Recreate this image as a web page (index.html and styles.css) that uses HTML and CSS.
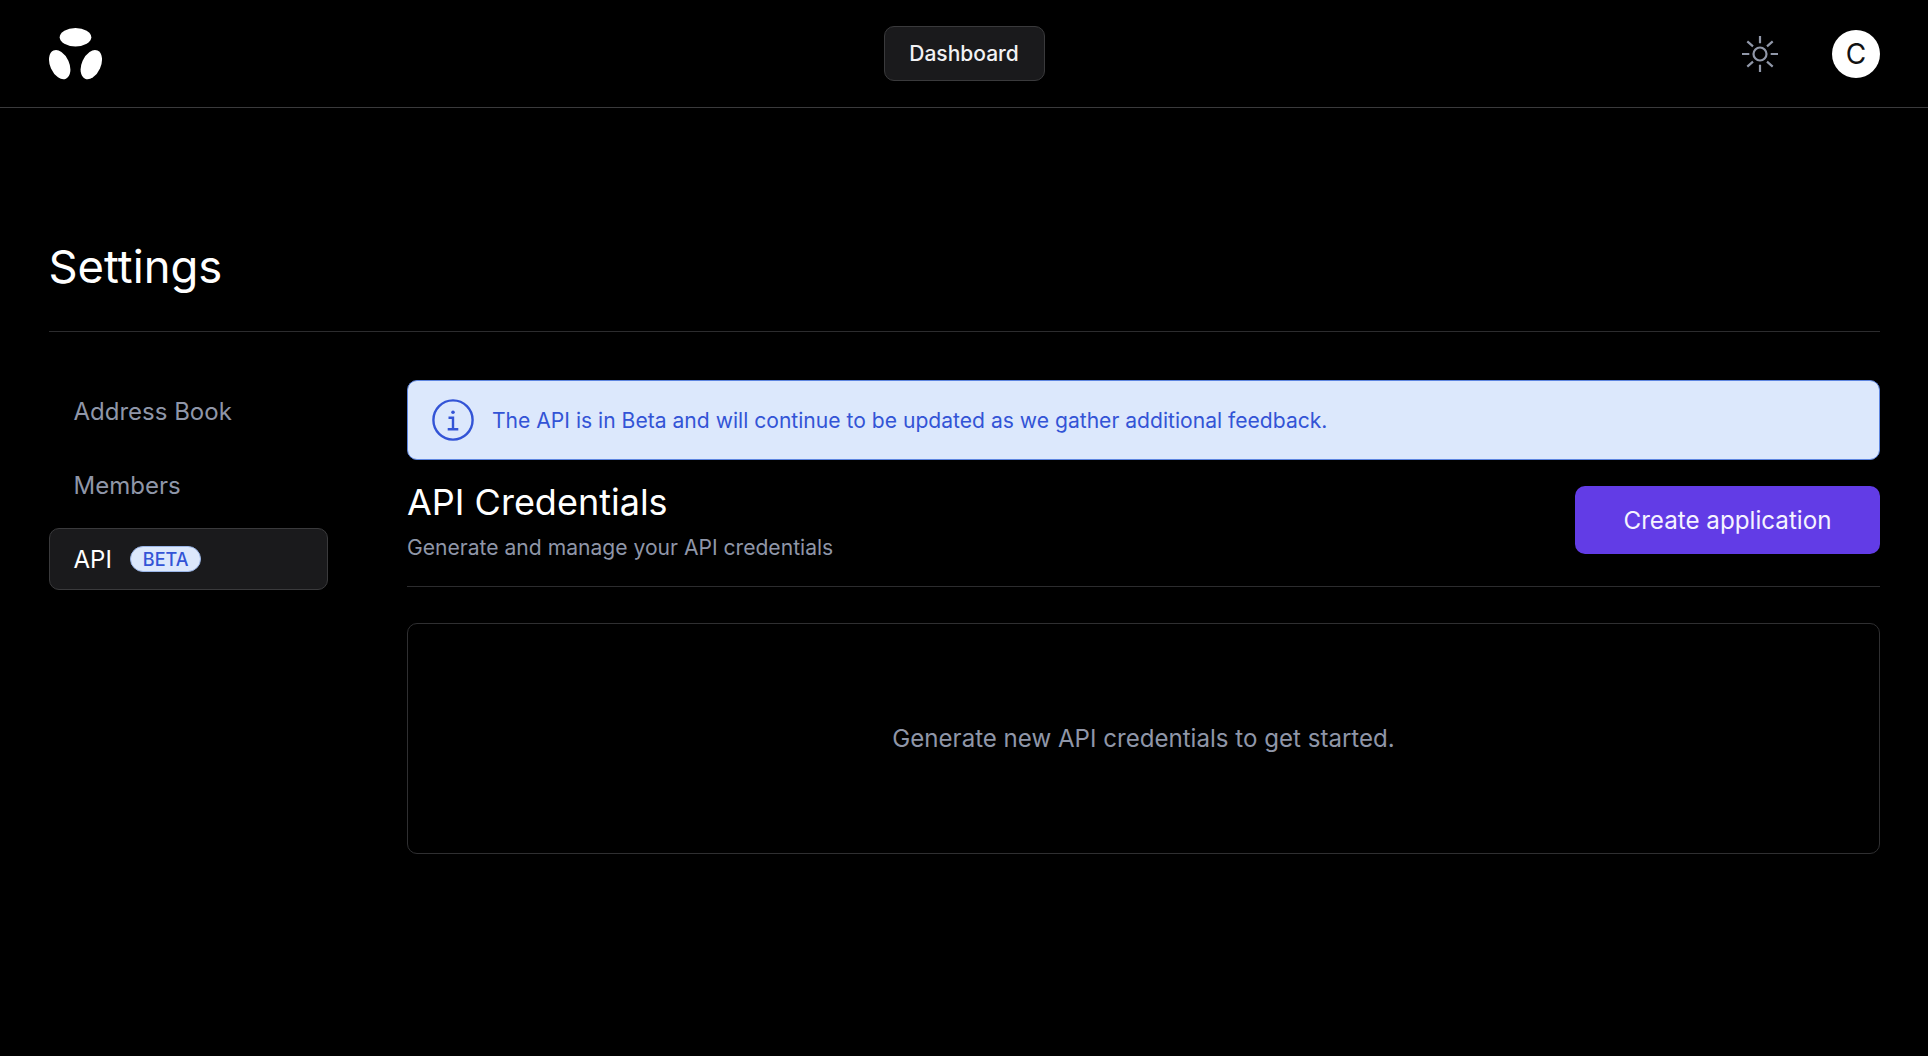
FILE: index.html
```html
<!DOCTYPE html>
<html lang="en">
<head>
<meta charset="utf-8">
<title>Settings</title>
<link rel="stylesheet" href="styles.css">
</head>
<body>
<header class="topbar">
  <svg class="logo" width="55" height="52" viewBox="0 0 55 52" aria-hidden="true">
    <ellipse cx="27.5" cy="9.2" rx="15.8" ry="9.2" fill="#fff"/>
    <ellipse cx="11.7" cy="36.6" rx="9.5" ry="15.4" fill="#fff" transform="rotate(-24 11.7 36.6)"/>
    <ellipse cx="43.3" cy="36.6" rx="9.5" ry="15.4" fill="#fff" transform="rotate(24 43.3 36.6)"/>
  </svg>
  <a class="tab">Dashboard</a>
  <div class="actions">
    <svg class="sun" width="38" height="38" viewBox="0 0 38 38" fill="none" stroke="#9097a8" stroke-width="2.2" aria-hidden="true">
      <circle cx="19" cy="19" r="6.5"/>
      <path d="M19 1v7.3M19 29.7V37M1 19h7.3M29.7 19H37M6.3 6.3l5.7 5M26 26.7l5.7 5M6.3 31.7l5.7-5M26 11.3l5.7-5"/>
    </svg>
    <div class="avatar">C</div>
  </div>
</header>
<main class="page">
  <h1 class="title">Settings</h1>
  <div class="layout">
    <nav class="sidenav">
      <a class="navitem">Address Book</a>
      <a class="navitem">Members</a>
      <a class="navitem active">API <span class="badge">BETA</span></a>
    </nav>
    <section class="content">
      <div class="banner">
        <svg class="info" width="42" height="42" viewBox="0 0 42 42" fill="none" stroke="#3354d6" aria-hidden="true">
          <circle cx="21" cy="21" r="19.6" stroke-width="2.4"/>
          <path d="M16.5 18.7h4.5v11.6M15.7 30.3h10.6" stroke-width="2.4"/>
          <circle cx="21" cy="13.2" r="1.8" fill="#3354d6" stroke="none"/>
        </svg>
        <span>The API is in Beta and will continue to be updated as we gather additional feedback.</span>
      </div>
      <div class="section-head">
        <div>
          <h2 class="section-title">API Credentials</h2>
          <p class="section-sub">Generate and manage your API credentials</p>
        </div>
        <button class="primary">Create application</button>
      </div>
      <div class="empty">Generate new API credentials to get started.</div>
    </section>
  </div>
</main>
</body>
</html>
```
FILE: styles.css
```css
* { box-sizing: border-box; }
html, body { margin: 0; height: 100%; }
body { background: #000; color: #fff; font-family: Inter, "Liberation Sans", sans-serif; }
.topbar { height: 108px; border-bottom: 1px solid #3a3a3c; padding: 0 48px 0 48px; display: grid; grid-template-columns: 1fr auto 1fr; align-items: center; }
.logo { display: block; margin-top: 1px; }
.tab { justify-self: center; width: 161px; height: 55px; display: flex; align-items: center; justify-content: center; background: #1a1a1c; border: 1px solid #3a3a3c; border-radius: 10px; font-size: 21px; font-weight: 500; color: #f2f2f4; }
.actions { display: flex; justify-content: flex-end; align-items: center; gap: 53px; }
.sun { display: block; }
.avatar { width: 48px; height: 48px; border-radius: 50%; background: #fff; color: #111; display: flex; align-items: center; justify-content: center; font-size: 28px; }
.page { padding: 0 48px 0 48.5px; }
.title { margin: 0; padding-top: 129px; height: 224px; font-size: 45.4px; font-weight: 400; line-height: 60px; border-bottom: 1px solid #2c2c2e; }
.layout { display: grid; grid-template-columns: 279.5px 1fr; column-gap: 79px; padding-top: 48px; }
.sidenav { display: flex; flex-direction: column; gap: 12px; }
.navitem { height: 62px; padding: 0 24px; display: flex; align-items: center; font-size: 24px; color: #8f96a8; border: 1px solid transparent; border-radius: 10px; }
.navitem.active { background: #1a1a1c; border-color: #3a3a3c; color: #fff; }
.badge { margin-left: 18px; height: 26px; padding: 0 12px; display: inline-flex; align-items: center; border-radius: 13px; background: #dce8fc; border: 1px solid #9bb6e8; color: #3354d6; font-size: 18px; font-weight: 500; }
.banner { height: 80px; padding: 0 24px; display: flex; align-items: center; gap: 18px; background: #dce8fc; border: 1px solid #5e86e0; border-radius: 10px; color: #3354d6; font-size: 21.1px; }
.info { flex: none; }
.section-head { display: flex; justify-content: space-between; align-items: flex-start; padding-top: 26px; height: 127px; border-bottom: 1px solid #2c2c2e; }
.section-title { margin: -2px 0 0; font-size: 36px; font-weight: 400; line-height: 36px; }
.section-sub { margin: 13px 0 0; font-size: 21.1px; color: #8f96a8; line-height: 30px; }
.primary { width: 305px; height: 68px; background: #623ce6; color: #f5f3ff; border: none; border-radius: 10px; font: 400 24.2px Inter, "Liberation Sans", sans-serif; }
.empty { margin-top: 36px; height: 231px; display: flex; align-items: center; justify-content: center; border: 1px solid #2f2f31; border-radius: 10px; color: #8f96a8; font-size: 24.1px; }
```
